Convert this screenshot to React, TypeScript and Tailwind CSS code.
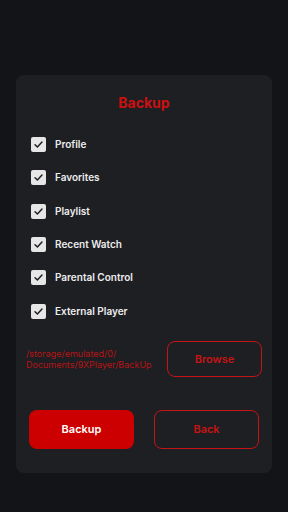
const items = ["Profile", "Favorites", "Playlist", "Recent Watch", "Parental Control", "External Player"];

function CheckBox() {
  return (
    <div className="w-[15px] h-[15px] rounded-[2px] bg-[#e6e6e6] flex items-center justify-center">
      <svg width="11" height="11" viewBox="0 0 12 12" fill="none">
        <path d="M2.2 6.2 L4.8 8.8 L9.8 3.2" stroke="#1e1f23" strokeWidth="1.6" strokeLinecap="round" strokeLinejoin="round" />
      </svg>
    </div>
  );
}

export default function App() {
  return (
    <div className="w-[288px] h-[512px] bg-[#131418] pt-[75px] px-4 font-['Inter',sans-serif]">
      <div className="w-[256px] h-[398px] bg-[#1e1f23] rounded-[8px] pt-[94px] relative">
        {/* title */}
        <div className="absolute top-[19px] left-0 right-0 text-center text-[14px] font-bold text-[#cc1010] leading-[18px]">
          Backup
        </div>

        {/* options */}
        <div className="flex flex-col pl-[15px] -mt-[41px]">
          {items.map((label) => (
            <div key={label} className="h-[33.3px] flex items-center gap-[9px]">
              <CheckBox />
              <span className="text-[10px] font-semibold text-[#ececec]">{label}</span>
            </div>
          ))}
        </div>

        {/* path + browse */}
        <div className="flex items-center justify-between pl-[10px] pr-[10px] mt-[13px]">
          <div className="text-[9px] leading-[11px] text-[#b51414]">
            /storage/emulated/0/
            <br />
            Documents/9XPlayer/BackUp
          </div>
          <button className="w-[95px] h-[36px] rounded-[8px] border-[1.5px] border-[#c41414] text-[#c41414] text-[11px] font-semibold">
            Browse
          </button>
        </div>

        {/* actions */}
        <div className="flex gap-[20px] px-[13px] mt-[33px]">
          <button className="w-[105px] h-[39px] rounded-[8px] bg-[#cc0000] text-white text-[11px] font-semibold">
            Backup
          </button>
          <button className="w-[105px] h-[39px] rounded-[8px] border-[1.5px] border-[#c41414] text-[#c41414] text-[11px] font-semibold">
            Back
          </button>
        </div>
      </div>
    </div>
  );
}
